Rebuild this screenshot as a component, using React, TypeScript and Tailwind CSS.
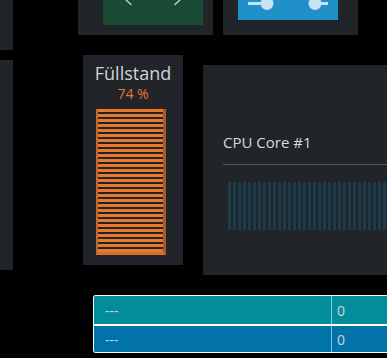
import React from "react";

const font = { fontFamily: '"Open Sans", "Noto Sans", sans-serif' };

export default function App() {
  const hStripes = Array.from({ length: 29 });
  const vStripes = Array.from({ length: 34 });
  return (
    <div className="w-[387px] h-[358px] bg-black overflow-hidden flex" style={font}>
      {/* left column */}
      <div className="w-[13px] shrink-0 flex flex-col gap-[10px]">
        <div className="h-[50px] bg-[#212529]" />
        <div className="h-[210px] bg-[#212529]" />
      </div>

      <div className="flex-1 flex flex-col min-w-0">
        {/* top row */}
        <div className="flex h-[35px]">
          <div className="ml-[65px] w-[135px] h-[35px] bg-[#212529] shrink-0">
            <div className="ml-[25px] w-[100px] h-[25px] bg-[#194a33] relative">
              <svg width="100" height="25" className="absolute left-0 top-0">
                <path d="M21 -2 L28.5 5" stroke="#b9c4c0" strokeWidth="1.6" fill="none" />
                <path d="M79 -2 L71.5 5" stroke="#b9c4c0" strokeWidth="1.6" fill="none" />
              </svg>
            </div>
          </div>
          <div className="ml-[10px] w-[135px] h-[35px] bg-[#212529] shrink-0">
            <div className="ml-[15px] w-[100px] h-[20px] bg-[#2090c8] relative">
              <svg width="100" height="20" className="absolute left-0 top-0">
                <rect x="10" y="2" width="16" height="3" fill="#c6e3f5" />
                <circle cx="29" cy="3.5" r="6.5" fill="#c6e3f5" />
                <circle cx="77" cy="3.5" r="6.5" fill="#c6e3f5" />
                <rect x="80" y="2" width="10" height="3" fill="#c6e3f5" />
              </svg>
            </div>
          </div>
        </div>

        {/* middle row */}
        <div className="flex items-start mt-[20px]">
          <div className="ml-[70px] w-[100px] h-[210px] bg-[#212529] shrink-0 flex flex-col items-center pt-[7px]">
            <div className="text-[18px] leading-[22px] text-[#d0d4d6]">Füllstand</div>
            <div className="text-[14px] leading-[19px] text-[#e8792c]">74 %</div>
            <div className="self-start ml-[13px] mt-[6px] w-[70px] h-[146px] bg-[#e8792c] border-l-2 border-l-[#c2682c] border-r-[3px] border-r-[#a5592a] border-b-[3px] border-b-[#d06e2c] flex flex-col gap-[3px] pt-[3px] overflow-hidden">
              {hStripes.map((_, i) => (
                <div key={i} className="h-[2px] bg-[#1f2428] shrink-0" />
              ))}
            </div>
          </div>

          <div className="ml-[20px] mt-[10px] flex-1 min-w-0 h-[210px] bg-[#212529] pl-[20px] pt-[67px]">
            <div className="text-[15px] leading-[20px] text-[#d6d9db] whitespace-nowrap">CPU Core #1</div>
            <div className="mt-[12px] h-px bg-[#505558]" />
            <div className="mt-[17px] ml-[5px] h-[48px] flex gap-[2px] overflow-hidden">
              {vStripes.map((_, i) => (
                <div key={i} className="w-[3px] h-full bg-[#1b3d4b] shrink-0" />
              ))}
            </div>
          </div>
        </div>

        {/* table */}
        <div className="ml-[80px] mt-[20px] border border-white border-r-0 rounded-l-[3px] overflow-hidden text-[14px] text-[#c9d6da]">
          <div className="flex h-[28px] bg-[#038d9c]">
            <div className="w-[238px] shrink-0 border-r border-r-[#8ccbd6] pl-[11px] flex items-center">---</div>
            <div className="pl-[5px] flex items-center">0</div>
          </div>
          <div className="flex h-[28px] bg-[#0173a8] border-t-2 border-t-white">
            <div className="w-[238px] shrink-0 border-r border-r-[#8cbdd6] pl-[11px] flex items-center">---</div>
            <div className="pl-[5px] flex items-center">0</div>
          </div>
        </div>
      </div>
    </div>
  );
}
